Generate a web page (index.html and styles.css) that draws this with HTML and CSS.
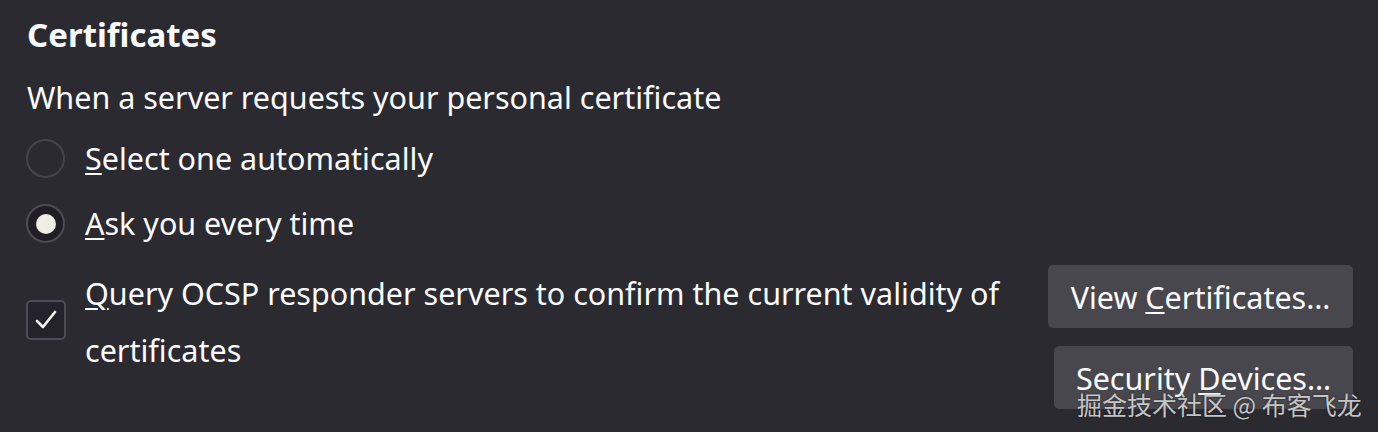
FILE: index.html
```html
<!DOCTYPE html>
<html lang="en">
<head>
<meta charset="utf-8">
<title>Certificates</title>
<link rel="stylesheet" href="styles.css">
</head>
<body>
<div class="page">
  <h2 class="title">Certificates</h2>
  <div class="subtitle">When a server requests your personal certificate</div>
  <label class="radio-row">
    <span class="radio"></span>
    <span class="label"><u>S</u>elect one automatically</span>
  </label>
  <label class="radio-row">
    <span class="radio checked"><span class="dot"></span></span>
    <span class="label"><u>A</u>sk you every time</span>
  </label>
  <div class="check-row">
    <label class="check-item">
      <span class="checkbox">
        <svg width="22" height="20" viewBox="0 0 22 20"><path d="M2 11 L8 17 L20 2" fill="none" stroke="#f4f4ee" stroke-width="2.6" stroke-linecap="round" stroke-linejoin="round"/></svg>
      </span>
      <span class="check-label"><u>Q</u>uery OCSP responder servers to confirm the current validity of certificates</span>
    </label>
    <div class="buttons">
      <button class="btn btn-wide">View <u>C</u>ertificates…</button>
      <button class="btn btn-narrow">Security <u>D</u>evices…</button>
    </div>
  </div>
</div>
<div class="watermark">掘金技术社区 @ 布客飞龙</div>
</body>
</html>
```

FILE: styles.css
```css
html, body {
  margin: 0;
  padding: 0;
  background: #2b2a31;
  color: #fbfbfe;
  font-family: "Noto Sans", "Open Sans", sans-serif;
  height: 432px;
  overflow: hidden;
}
.page {
  padding: 14px 25px 0 26px;
  display: flex;
  flex-direction: column;
}
.title {
  margin: 0 0 16px 1px;
  height: 42px;
  line-height: 42px;
  font-size: 33px;
  font-weight: 700;
}
.subtitle {
  margin-left: 1px;
  height: 50px;
  line-height: 50px;
  font-size: 30.5px;
  margin-bottom: 4px;
}
.radio-row {
  height: 65px;
  display: flex;
  align-items: center;
  gap: 20px;
  font-size: 30.5px;
}
.radio-row .label {
  margin-top: -2px;
}
.radio {
  width: 39px;
  height: 39px;
  box-sizing: border-box;
  border-radius: 50%;
  border: 2px solid #45444c;
  background: #2b2a31;
  display: flex;
  align-items: center;
  justify-content: center;
  flex: none;
}
.radio.checked {
  background: #1f1e25;
  border-color: #4d4c55;
}
.dot {
  width: 20px;
  height: 20px;
  border-radius: 50%;
  background: #eeeee4;
}
u {
  text-decoration: underline;
  text-decoration-thickness: 2px;
  text-underline-offset: 3px;
}
.check-row {
  margin-top: 9px;
  display: flex;
  align-items: flex-start;
}
.check-item {
  display: flex;
  align-items: center;
  gap: 19px;
  flex: 1;
  padding-right: 30px;
}
.checkbox {
  width: 40px;
  height: 40px;
  box-sizing: border-box;
  border: 2px solid #4c4b56;
  border-radius: 5px;
  background: #24232b;
  display: flex;
  align-items: center;
  justify-content: center;
  flex: none;
  margin-top: -4px;
}
.check-label {
  font-size: 30.5px;
  line-height: 57px;
}
.buttons {
  display: flex;
  flex-direction: column;
  align-items: flex-end;
  gap: 18px;
  flex: none;
}
.btn {
  height: 63px;
  border: none;
  border-radius: 5px;
  background: #48474e;
  color: #fbfbfe;
  font-family: inherit;
  font-size: 30.5px;
  padding: 0;
}
.btn-wide { width: 305px; }
.btn-narrow { width: 299px; }
.watermark {
  position: absolute;
  left: 1077px;
  top: 386px;
  font-family: "Noto Sans CJK SC", sans-serif;
  font-size: 25px;
  color: rgba(235, 235, 235, 0.82);
  text-shadow: 0 0 2px rgba(0,0,0,0.6);
  white-space: nowrap;
}
```
